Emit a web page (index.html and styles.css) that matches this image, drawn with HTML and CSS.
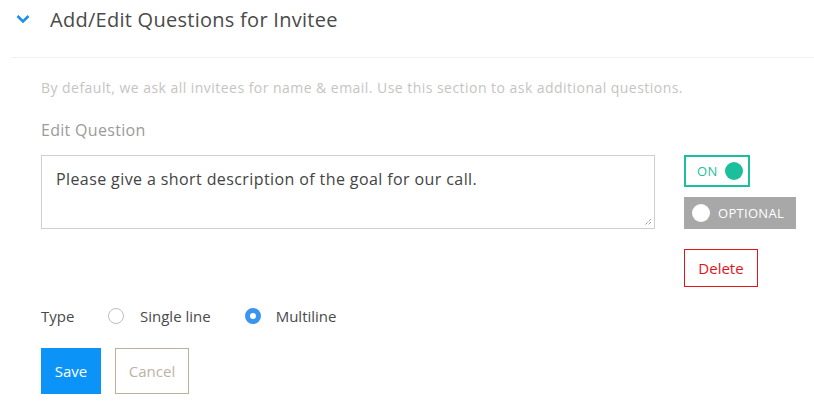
FILE: index.html
```html
<!DOCTYPE html>
<html>
<head>
<meta charset="utf-8">
<link rel="stylesheet" href="styles.css">
</head>
<body>
<div class="panel">
  <div class="header">
    <svg class="chevron" width="14" height="10" viewBox="0 0 14 10"><path d="M1.5 2 L7 7.5 L12.5 2" fill="none" stroke="#1a8ff0" stroke-width="2.6"/></svg>
    <h2 class="title">Add/Edit Questions for Invitee</h2>
  </div>
  <div class="content">
    <p class="desc">By default, we ask all invitees for name &amp; email. Use this section to ask additional questions.</p>
    <div class="label">Edit Question</div>
    <div class="edit-row">
      <div class="textarea">Please give a short description of the goal for our call.<svg class="grip" width="9" height="9" viewBox="0 0 9 9"><path d="M8 2 L2 8 M8 5 L5 8" stroke="#777" stroke-width="1" stroke-dasharray="1 1"/></svg></div>
      <div class="side">
        <div class="toggle-on"><span>ON</span><span class="dot"></span></div>
        <div class="toggle-opt"><span class="dot"></span><span>OPTIONAL</span></div>
        <div class="delete">Delete</div>
      </div>
    </div>
    <div class="type-row">
      <span class="type-label">Type</span>
      <span class="radio"></span><span class="opt">Single line</span>
      <span class="radio checked"></span><span class="opt">Multiline</span>
    </div>
    <div class="actions">
      <div class="btn save">Save</div>
      <div class="btn cancel">Cancel</div>
    </div>
  </div>
</div>
</body>
</html>
```
FILE: styles.css
```css
* { box-sizing: border-box; }
body {
  margin: 0;
  background: #fff;
  font-family: "Open Sans", Lato, sans-serif;
  color: #4a4a4a;
}
.panel { margin-left: 11px; }
.header {
  display: flex;
  align-items: center;
  height: 58px;
  padding: 0 0 19px 5px;
  border-bottom: 1px solid #eef0f3;
}
.chevron { display: block; }
.title {
  margin: 0 0 0 20px;
  font-size: 20px;
  font-weight: 400;
  color: #4a4a4a;
  letter-spacing: 0.27px;
}
.content { padding-left: 30px; }
.desc {
  margin: 21px 0 0;
  font-size: 14px;
  line-height: 18px;
  color: #c6c4c2;
  letter-spacing: 0.46px;
}
.label {
  margin-top: 23px;
  font-size: 16px;
  line-height: 20px;
  color: #9b9b9b;
  letter-spacing: 0.3px;
}
.edit-row {
  display: flex;
  margin-top: 15px;
}
.textarea {
  position: relative;
  width: 614px;
  height: 74px;
  border: 1px solid #cfcfcf;
  padding: 13px 14px;
  font-size: 16px;
  line-height: 20px;
  color: #444;
  letter-spacing: 0.4px;
}
.grip { position: absolute; right: 2px; bottom: 2px; }
.side {
  margin-left: 29px;
  display: flex;
  flex-direction: column;
  align-items: flex-start;
}
.toggle-on {
  display: flex;
  align-items: center;
  height: 32px;
  padding: 0 5px 0 11px;
  border: 2px solid #1cbf9b;
  color: #1cbf9b;
  font-size: 13px;
  letter-spacing: 0.3px;
}
.toggle-on .dot {
  width: 18px; height: 18px; border-radius: 50%;
  background: #1cbf9b; margin-left: 7px;
}
.toggle-opt {
  display: flex;
  align-items: center;
  margin-top: 10px;
  height: 32px;
  padding: 0 12px 0 8px;
  background: #a8a8a8;
  color: #fff;
  font-size: 13px;
  letter-spacing: 0.3px;
}
.toggle-opt .dot {
  width: 18px; height: 18px; border-radius: 50%;
  background: #fff; margin-right: 8px;
}
.delete {
  margin-top: 20px;
  height: 38px;
  width: 74px;
  border: 1px solid #e2141a;
  color: #e2141a;
  font-size: 15px;
  display: flex;
  align-items: center;
  justify-content: center;
}
.type-row {
  display: flex;
  align-items: center;
  margin-top: 19px;
  height: 20px;
  font-size: 15px;
}
.type-label { width: 67px; color: #4a4a4a; }
.radio {
  width: 16px; height: 16px; border-radius: 50%;
  border: 1px solid #bdbdbd;
  margin-right: 16px;
}
.radio.checked {
  border: 5px solid #3b95f0;
  background: #fff;
  margin-right: 15px;
}
.opt { margin-right: 34px; color: #4a4a4a; }
.actions {
  display: flex;
  margin-top: 22px;
}
.btn {
  height: 46px;
  display: flex;
  align-items: center;
  justify-content: center;
  font-size: 15px;
}
.save { width: 60px; background: #0c93f7; color: #fff; }
.cancel {
  width: 74px; margin-left: 14px;
  border: 1px solid #bbb09c;
  color: #bdb3a3;
}
```
